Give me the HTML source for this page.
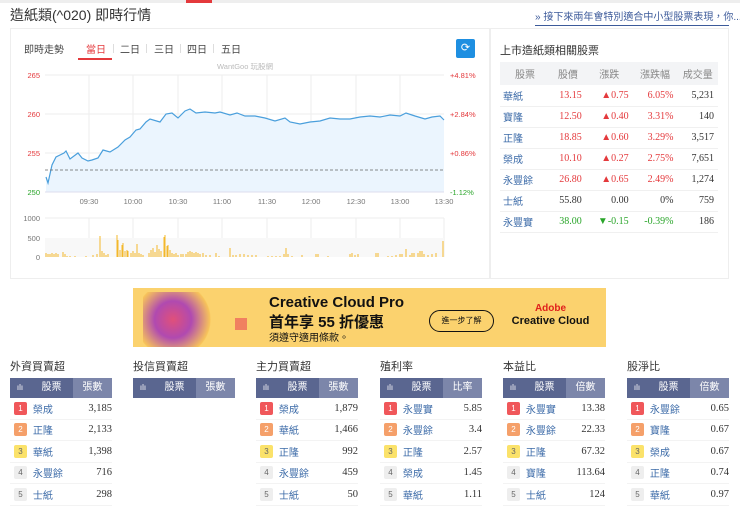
<!DOCTYPE html>
<html><head><meta charset="utf-8"><style>
*{margin:0;padding:0;box-sizing:border-box}
body{width:740px;height:512px;overflow:hidden;background:#fff;font-family:"Liberation Sans","Noto Sans CJK TC",sans-serif;color:#333;position:relative}
.abs{position:absolute}
.topbar{left:0;top:0;width:740px;height:3px;background:#eee}
.red{left:186px;top:0;width:26px;height:3px;background:#e4393c}
h1{position:absolute;left:10px;top:5px;font-size:14px;font-weight:normal;color:#333}
.news{position:absolute;left:535px;top:8px;font-size:10px;color:#3c5a9a;border-bottom:1px solid #3c5a9a;padding-bottom:2px;width:194px;white-space:nowrap}
.panel{position:absolute;border:1px solid #eee;background:#fff}
.tab{position:absolute;top:41px;font-size:10px;color:#444}
table{border-collapse:collapse}
.rt{position:absolute;left:500px;top:62px;width:218px;font-size:10px}
.rt th{background:#f3f4f6;color:#888;font-weight:normal;height:23px;text-align:center}
.rt td{height:21px;border-bottom:1px solid #f0f0f0;text-align:right;padding-right:4px;font-family:"Liberation Serif","Noto Sans CJK TC",serif}
.rt td:first-child{text-align:left;padding-left:3px;color:#3c6ba8;font-family:"Liberation Sans","Noto Sans CJK TC",sans-serif}
.up{color:#e4393c}.dn{color:#2aa52a}
.sec{position:absolute;top:358px;width:102px}
.sec .t{font-size:11px;color:#333;height:20px}
.hd{height:20px;background:#5a6690;display:flex;color:#fff;font-size:10px;line-height:20px}
.hd .i{width:20px;text-align:center;font-size:8px}
.hd .n{width:43px;text-align:center}
.hd .v{width:39px;text-align:center;background:#7c86aa}
.row{height:21.5px;display:flex;align-items:center;border-bottom:1px solid #f3f3f3;font-size:10px}
.row .k{width:13px;height:13px;margin:0 4px 0 4px;font-size:8px;text-align:center;line-height:13px;color:#666;background:#eee;border-radius:2px}
.k1{background:#f0575a!important;color:#fff!important}.k2{background:#f5a06a!important;color:#fff!important}.k3{background:#fbe26a!important}
.row .n{width:42px;color:#3c6ba8;padding-left:2px}
.row .v{width:40px;text-align:right;font-family:"Liberation Serif",serif;font-size:10.5px}
</style></head><body>
<div class="abs topbar"></div><div class="abs red"></div>
<h1>造紙類(^020) 即時行情</h1>
<div class="news">» 接下來兩年會特別適合中小型股票表現，你...</div>

<div class="panel" style="left:10px;top:28px;width:480px;height:251px"></div>
<div class="panel" style="left:490px;top:28px;width:239px;height:251px"></div>

<div class="tab" style="left:24px">即時走勢</div>
<div class="tab" style="left:86px;color:#e4393c">當日</div>
<div class="abs" style="left:78px;top:58px;width:34px;height:2px;background:#e4393c"></div>
<div class="tab" style="left:120px">二日</div>
<div class="tab" style="left:154px">三日</div>
<div class="tab" style="left:187px">四日</div>
<div class="tab" style="left:221px">五日</div>
<div class="abs" style="left:113px;top:44px;width:1px;height:9px;background:#ddd"></div>
<div class="abs" style="left:146px;top:44px;width:1px;height:9px;background:#ddd"></div>
<div class="abs" style="left:180px;top:44px;width:1px;height:9px;background:#ddd"></div>
<div class="abs" style="left:213px;top:44px;width:1px;height:9px;background:#ddd"></div>
<div class="abs" style="left:456px;top:39px;width:19px;height:19px;background:#1e8fe1;border-radius:2px;color:#fff;font-size:11px;text-align:center;line-height:19px">⟳</div>

<svg class="abs" style="left:0;top:0" width="490" height="280" font-family="Liberation Sans,Noto Sans CJK TC,sans-serif">
<text x="245" y="69" font-size="7.5" fill="#bbb" text-anchor="middle">WantGoo 玩股網</text>
<g stroke="#eeeeee" stroke-width="1">
<line x1="45" y1="75" x2="444" y2="75"/><line x1="45" y1="114" x2="444" y2="114"/><line x1="45" y1="153" x2="444" y2="153"/>
<line x1="89" y1="75" x2="89" y2="192"/><line x1="133" y1="75" x2="133" y2="192"/><line x1="178" y1="75" x2="178" y2="192"/><line x1="222" y1="75" x2="222" y2="192"/><line x1="267" y1="75" x2="267" y2="192"/><line x1="311" y1="75" x2="311" y2="192"/><line x1="356" y1="75" x2="356" y2="192"/><line x1="400" y1="75" x2="400" y2="192"/>
<line x1="89" y1="218" x2="89" y2="257"/><line x1="133" y1="218" x2="133" y2="257"/><line x1="178" y1="218" x2="178" y2="257"/><line x1="222" y1="218" x2="222" y2="257"/><line x1="267" y1="218" x2="267" y2="257"/><line x1="311" y1="218" x2="311" y2="257"/><line x1="356" y1="218" x2="356" y2="257"/><line x1="400" y1="218" x2="400" y2="257"/><line x1="444" y1="218" x2="444" y2="257"/>
<line x1="45" y1="218" x2="444" y2="218"/>
</g>
<rect x="45" y="238" width="399" height="19" fill="#f8f8f8"/>
<path d="M46,177 L48,183 L52,165 L56,157 L60,155 L64,153 L66,151 L70,159 L78,153 L82,158 L88,161 L92,160 L98,158 L103,150 L110,152 L118,147 L125,140 L130,137 L136,130 L140,129 L146,122 L150,119 L160,122 L166,114 L172,113 L178,118 L185,111 L190,109 L196,113 L205,112 L215,113 L220,112 L230,115 L237,113 L245,116 L255,116 L265,118 L275,121 L285,118 L290,122 L300,124 L310,122 L320,121 L330,118 L340,119 L350,119 L360,117 L370,116 L380,117 L390,115 L400,116 L406,113 L415,116 L425,119 L432,117 L440,116 L444,120 L444,192 L46,192 Z" fill="#ebf5fe"/>
<path d="M46,177 L48,183 L52,165 L56,157 L60,155 L64,153 L66,151 L70,159 L78,153 L82,158 L88,161 L92,160 L98,158 L103,150 L110,152 L118,147 L125,140 L130,137 L136,130 L140,129 L146,122 L150,119 L160,122 L166,114 L172,113 L178,118 L185,111 L190,109 L196,113 L205,112 L215,113 L220,112 L230,115 L237,113 L245,116 L255,116 L265,118 L275,121 L285,118 L290,122 L300,124 L310,122 L320,121 L330,118 L340,119 L350,119 L360,117 L370,116 L380,117 L390,115 L400,116 L406,113 L415,116 L425,119 L432,117 L440,116 L444,120" fill="none" stroke="#4a9fdc" stroke-width="1.2"/>
<line x1="45" y1="170" x2="444" y2="170" stroke="#666" stroke-dasharray="3,2" stroke-width="0.8"/>
<line x1="45" y1="192" x2="444" y2="192" stroke="#dde" stroke-width="1"/>
<g font-size="7.5" fill="#e4393c" text-anchor="end"><text x="40" y="78">265</text><text x="40" y="117">260</text><text x="40" y="156">255</text></g>
<text x="40" y="195" font-size="7.5" fill="#2aa52a" text-anchor="end">250</text>
<g font-size="7.5" fill="#e4393c"><text x="450" y="78">+4.81%</text><text x="450" y="117">+2.84%</text><text x="450" y="156">+0.86%</text></g>
<text x="450" y="195" font-size="7.5" fill="#2aa52a">-1.12%</text>
<g font-size="7.5" fill="#777" text-anchor="middle"><text x="89" y="204">09:30</text><text x="133" y="204">10:00</text><text x="178" y="204">10:30</text><text x="222" y="204">11:00</text><text x="267" y="204">11:30</text><text x="311" y="204">12:00</text><text x="356" y="204">12:30</text><text x="400" y="204">13:00</text><text x="444" y="204">13:30</text></g>
<g font-size="7.5" fill="#777" text-anchor="end"><text x="40" y="221">1000</text><text x="40" y="241">500</text><text x="40" y="260">0</text></g>
<g stroke="#f3b82b" stroke-width="1">
<path d="M46,257V253M48,257V254M50,257V254M52,257V253M54,257V254M56,257V253M58,257V254M63,257V252M65,257V254M67,257V256M70,257V256M75,257V256M86,257V256M93,257V255M97,257V254M100,257V236M102,257V251M104,257V253M106,257V255M108,257V254M117,257V235M118,257V240M120,257V250M122,257V245M123,257V243M125,257V251M127,257V250M128,257V251M131,257V253M133,257V251M135,257V253M137,257V244M139,257V253M141,257V254M143,257V255M149,257V253M151,257V250M153,257V248M155,257V252M157,257V245M159,257V249M161,257V251M164,257V237M165,257V235M167,257V246M168,257V245M170,257V250M172,257V253M174,257V254M176,257V253M178,257V255M181,257V254M183,257V254M186,257V254M188,257V252M190,257V251M192,257V252M194,257V253M196,257V252M198,257V253M200,257V254M203,257V253M206,257V255M210,257V255M216,257V253M219,257V256M230,257V248M233,257V255M236,257V255M240,257V254M244,257V254M248,257V255M252,257V255M256,257V255M268,257V256M272,257V256M276,257V256M280,257V256M284,257V254M286,257V248M288,257V254M292,257V256M302,257V255M316,257V254M318,257V254M328,257V256M350,257V254M352,257V253M355,257V255M358,257V254M376,257V253M378,257V253M388,257V256M392,257V256M396,257V255M400,257V254M402,257V254M406,257V249M410,257V255M412,257V253M414,257V253M418,257V253M420,257V251M422,257V251M424,257V254M428,257V255M432,257V254M436,257V253M443,257V241"/>
</g>
</svg>

<div class="abs" style="left:500px;top:42px;font-size:11px;color:#333">上市造紙類相關股票</div>
<table class="rt">
<tr><th>股票</th><th>股價</th><th>漲跌</th><th>漲跌幅</th><th>成交量</th></tr>
<tr><td>華紙</td><td class="up">13.15</td><td class="up">▲0.75</td><td class="up">6.05%</td><td>5,231</td></tr>
<tr><td>寶隆</td><td class="up">12.50</td><td class="up">▲0.40</td><td class="up">3.31%</td><td>140</td></tr>
<tr><td>正隆</td><td class="up">18.85</td><td class="up">▲0.60</td><td class="up">3.29%</td><td>3,517</td></tr>
<tr><td>榮成</td><td class="up">10.10</td><td class="up">▲0.27</td><td class="up">2.75%</td><td>7,651</td></tr>
<tr><td>永豐餘</td><td class="up">26.80</td><td class="up">▲0.65</td><td class="up">2.49%</td><td>1,274</td></tr>
<tr><td>士紙</td><td>55.80</td><td>0.00</td><td>0%</td><td>759</td></tr>
<tr><td>永豐實</td><td class="dn">38.00</td><td class="dn">▼-0.15</td><td class="dn">-0.39%</td><td>186</td></tr>
</table>

<div class="abs" style="left:133px;top:288px;width:473px;height:59px;background:#fbd26e">
<div class="abs" style="left:10px;top:4px;width:75px;height:55px;background:radial-gradient(circle at 40% 50%,#e0507a 0,#b04ab0 35%,#f7c35a 70%,transparent 72%)"></div>
<div class="abs" style="left:102px;top:30px;width:12px;height:12px;background:#f08060"></div>
<div class="abs" style="left:136px;top:6px;font-size:15px;font-weight:bold;color:#111">Creative Cloud Pro</div>
<div class="abs" style="left:136px;top:23px;font-size:15px;font-weight:bold;color:#111">首年享 55 折優惠</div>
<div class="abs" style="left:136px;top:41px;font-size:10px;color:#111">須遵守適用條款。</div>
<div class="abs" style="left:296px;top:22px;width:65px;height:22px;border:1.5px solid #111;border-radius:11px;font-size:8px;text-align:center;line-height:19px;color:#111">進一步了解</div>
<div class="abs" style="left:375px;top:15px;width:85px;text-align:center;font-size:10px;font-weight:bold;color:#e0201b">Adobe</div>
<div class="abs" style="left:375px;top:27px;width:85px;text-align:center;font-size:11px;font-weight:bold;color:#111">Creative Cloud</div>
</div>

<div class="sec" style="left:10px"><div class="t">外資買賣超</div><div class="hd"><div class="i">ılı</div><div class="n">股票</div><div class="v">張數</div></div>
<div class="row"><div class="k k1">1</div><div class="n">榮成</div><div class="v">3,185</div></div>
<div class="row"><div class="k k2">2</div><div class="n">正隆</div><div class="v">2,133</div></div>
<div class="row"><div class="k k3">3</div><div class="n">華紙</div><div class="v">1,398</div></div>
<div class="row"><div class="k">4</div><div class="n">永豐餘</div><div class="v">716</div></div>
<div class="row"><div class="k">5</div><div class="n">士紙</div><div class="v">298</div></div></div>

<div class="sec" style="left:133px"><div class="t">投信買賣超</div><div class="hd"><div class="i">ılı</div><div class="n">股票</div><div class="v">張數</div></div></div>

<div class="sec" style="left:256px"><div class="t">主力買賣超</div><div class="hd"><div class="i">ılı</div><div class="n">股票</div><div class="v">張數</div></div>
<div class="row"><div class="k k1">1</div><div class="n">榮成</div><div class="v">1,879</div></div>
<div class="row"><div class="k k2">2</div><div class="n">華紙</div><div class="v">1,466</div></div>
<div class="row"><div class="k k3">3</div><div class="n">正隆</div><div class="v">992</div></div>
<div class="row"><div class="k">4</div><div class="n">永豐餘</div><div class="v">459</div></div>
<div class="row"><div class="k">5</div><div class="n">士紙</div><div class="v">50</div></div></div>

<div class="sec" style="left:380px"><div class="t">殖利率</div><div class="hd"><div class="i">ılı</div><div class="n">股票</div><div class="v">比率</div></div>
<div class="row"><div class="k k1">1</div><div class="n">永豐實</div><div class="v">5.85</div></div>
<div class="row"><div class="k k2">2</div><div class="n">永豐餘</div><div class="v">3.4</div></div>
<div class="row"><div class="k k3">3</div><div class="n">正隆</div><div class="v">2.57</div></div>
<div class="row"><div class="k">4</div><div class="n">榮成</div><div class="v">1.45</div></div>
<div class="row"><div class="k">5</div><div class="n">華紙</div><div class="v">1.11</div></div></div>

<div class="sec" style="left:503px"><div class="t">本益比</div><div class="hd"><div class="i">ılı</div><div class="n">股票</div><div class="v">倍數</div></div>
<div class="row"><div class="k k1">1</div><div class="n">永豐實</div><div class="v">13.38</div></div>
<div class="row"><div class="k k2">2</div><div class="n">永豐餘</div><div class="v">22.33</div></div>
<div class="row"><div class="k k3">3</div><div class="n">正隆</div><div class="v">67.32</div></div>
<div class="row"><div class="k">4</div><div class="n">寶隆</div><div class="v">113.64</div></div>
<div class="row"><div class="k">5</div><div class="n">士紙</div><div class="v">124</div></div></div>

<div class="sec" style="left:627px"><div class="t">股淨比</div><div class="hd"><div class="i">ılı</div><div class="n">股票</div><div class="v">倍數</div></div>
<div class="row"><div class="k k1">1</div><div class="n">永豐餘</div><div class="v">0.65</div></div>
<div class="row"><div class="k k2">2</div><div class="n">寶隆</div><div class="v">0.67</div></div>
<div class="row"><div class="k k3">3</div><div class="n">榮成</div><div class="v">0.67</div></div>
<div class="row"><div class="k">4</div><div class="n">正隆</div><div class="v">0.74</div></div>
<div class="row"><div class="k">5</div><div class="n">華紙</div><div class="v">0.97</div></div></div>
</body></html>
